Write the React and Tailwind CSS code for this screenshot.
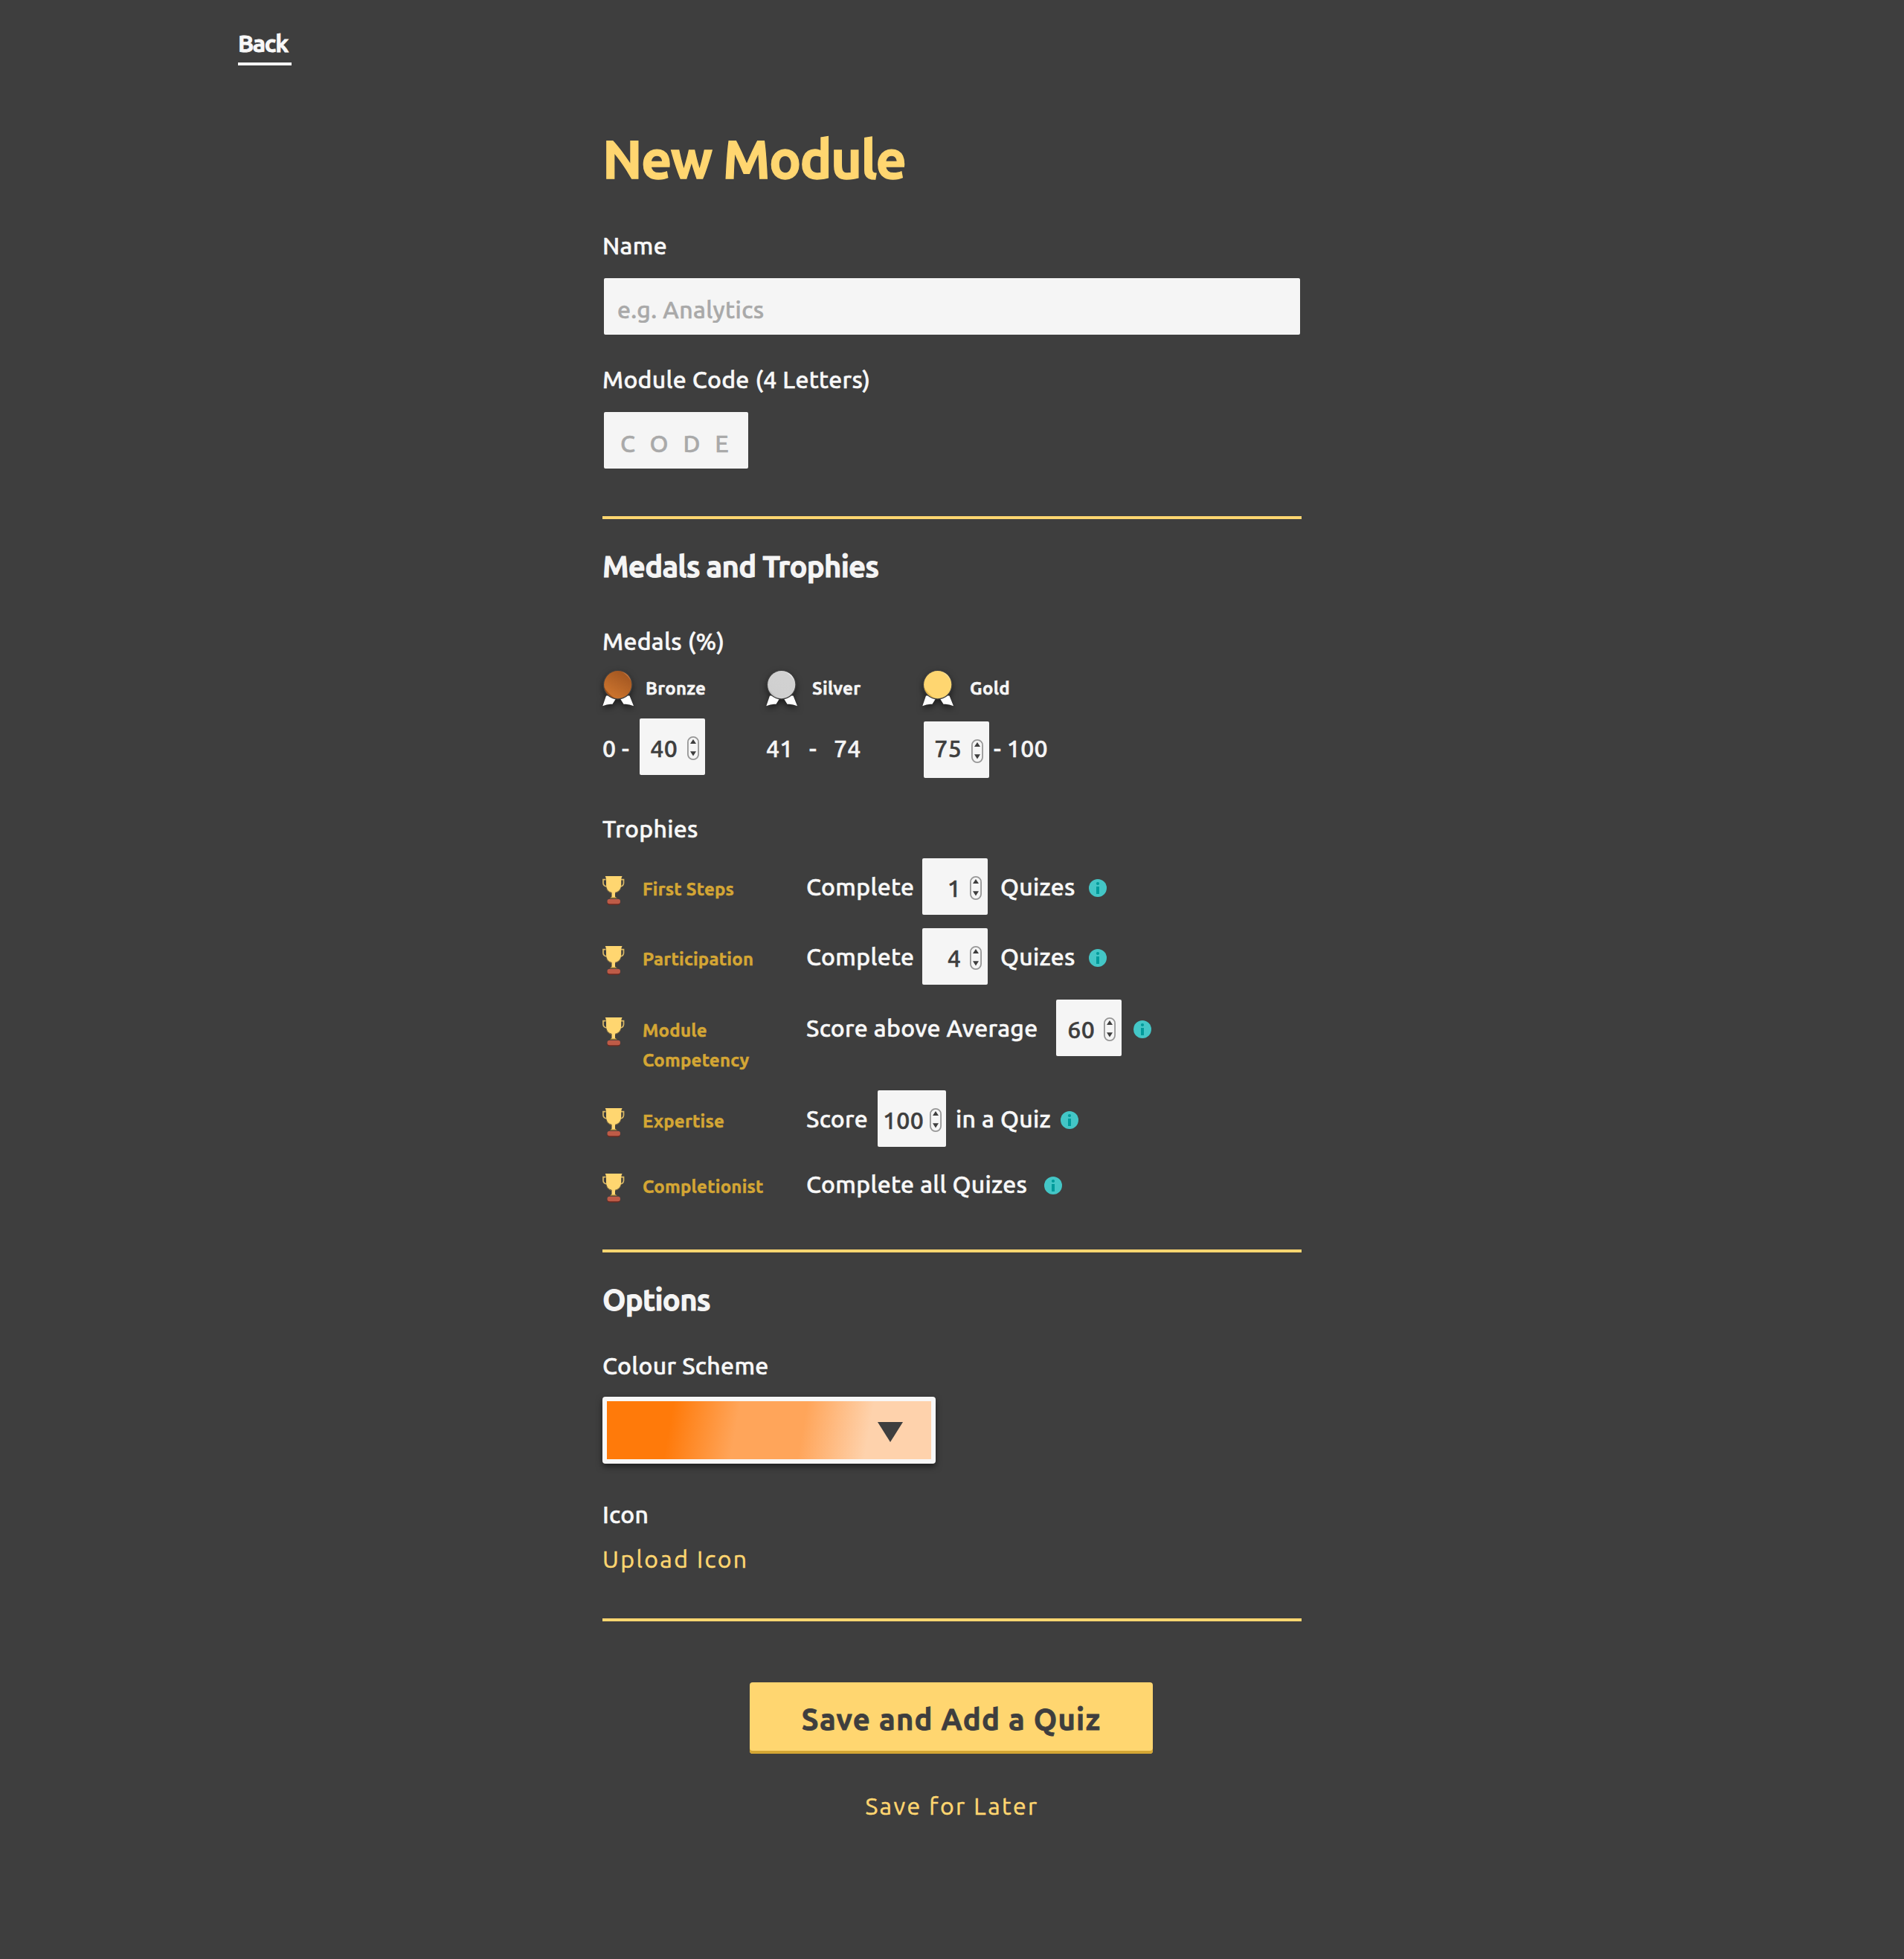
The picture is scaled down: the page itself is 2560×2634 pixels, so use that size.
import React from "react";

const medalTones = {
  bronze: { from: "#d0772f", to: "#9f5420", shine: "#cf8350", shade: "#8f4513" },
  silver: { from: "#cfcfcf", to: "#d2d2d2", shine: "#f6f6f6", shade: "#bdbdbd" },
  gold: { from: "#ffd670", to: "#ffd670", shine: "#ffe7a8", shade: "#dcae3e" },
};

function Medal({ tone }) {
  const t = medalTones[tone];
  return (
    <svg
      width="44"
      height="54"
      viewBox="0 0 44 54"
      className="shrink-0 overflow-visible drop-shadow-[0_4px_4px_rgba(0,0,0,0.5)]"
    >
      <defs>
        <linearGradient id={`face-${tone}`} x1="0.2" y1="1" x2="0.8" y2="0">
          <stop offset="0" stopColor={t.from} />
          <stop offset="1" stopColor={t.to} />
        </linearGradient>
        <linearGradient id={`shine-${tone}`} x1="0.25" y1="0.75" x2="0.8" y2="0.2">
          <stop offset="0.3" stopColor={t.shine} stopOpacity="0.35" />
          <stop offset="1" stopColor={t.shine} />
        </linearGradient>
      </defs>
      <path d="M5 39.5 0.3 53.2Q7 50 13.5 50.8L18 43.5 15 39ZM36.5 39.5 42 53.2Q35 50 28.5 50.8L24 43.5 27 39Z" fill="#fff" />
      <circle cx="20.7" cy="24.6" r="20" fill="#3e3e3e" />
      <circle cx="20.7" cy="24.6" r="18.6" fill={`url(#face-${tone})`} />
      <path d="M25 6.5A18.6 18.6 0 0 1 39 21Q34 11.500 25 6.500Z" fill={`url(#shine-${tone})`} />
      <path d="M2.400 28A18.600 18.600 0 0 0 17 42.900Q8 37.500 2.400 28Z" fill={t.shade} fillOpacity="0.75" />
    </svg>
  );
}

function Trophy() {
  return (
    <svg width="30" height="40" viewBox="0 0 30 40" className="mt-6 shrink-0">
      <path
        d="M4.500 4.700H1V9.500Q1.200 13 5.500 14M25 4.700H28.500V9.500Q28.300 13 24.500 14"
        fill="none"
        stroke="#d8b765"
        strokeWidth="1.700"
      />
      <path d="M3.700 0H26.600Q25.200 2 25.200 5V12.500Q24.500 20.500 17 22V27.500L19 29.800H10.700L12.500 27.500V22Q5.600 20.500 5 12.500V5Q5 2 3.700 0Z" fill="#ffd670" />
      <path d="M5.800 17Q8 22.300 12.500 22.500M17 22.500Q22 21.500 24.400 17" fill="none" stroke="#9b8045" strokeWidth="0.900" />
      <path d="M10.600 29.300H19.400" stroke="#8f7433" strokeWidth="1.400" />
      <path d="M10 31.500H20.500Q24 32.500 24 35.500 23.500 38.800 20.500 38.800H10Q6.500 38.800 6.400 35.500 6.500 32.500 10 31.500Z" fill="#6b2a20" />
      <rect x="6.500" y="30.700" width="17.500" height="6.600" rx="3.300" fill="#be5b47" />
    </svg>
  );
}

function Info({ className = "" }) {
  return (
    <svg width="24" height="24" viewBox="0 0 24 24" className={`mt-7 shrink-0 ${className}`}>
      <circle cx="12" cy="12" r="12" fill="#43c6c6" />
      <circle cx="12" cy="6" r="2.100" fill="#009a9a" />
      <rect x="10" y="10" width="4" height="10" fill="#009a9a" />
    </svg>
  );
}

function Stepper({ value, className = "w-[88px]", text = "mt-5 mr-[13px]", edge = "mr-2" }) {
  return (
    <div className={`flex h-[76px] shrink-0 justify-end rounded-[2px] bg-[#f5f5f5] ${className}`}>
      <span className={`text-[#3e3e3e] ${text}`}>{value}</span>
      <svg width="16" height="32" viewBox="0 0 16 32" className={`mt-6 shrink-0 ${edge}`}>
        <rect x="0.900" y="0.900" width="14.200" height="30.200" rx="7.100" fill="none" stroke="#979797" strokeWidth="1.800" />
        <path d="M8 4 12 10H4Z M8 26.500 4 20.300H12Z" fill="#3e3e3e" />
      </svg>
    </div>
  );
}

function Rule({ className }) {
  return <hr className={`h-1 border-0 bg-[#ffd670] ${className}`} />;
}

function TrophyRow({ label, height, children }) {
  return (
    <div className={`flex ${height}`}>
      <Trophy />
      <span className="mt-[22px] ml-6 w-[170px] text-[24px] leading-[40px] font-bold tracking-[0.01em] text-[#d4a634]">
        {label}
      </span>
      <div className="ml-[50px] flex items-start whitespace-nowrap">{children}</div>
    </div>
  );
}

export default function App() {
  return (
    <div className="min-h-[2634px] bg-[#3e3e3e] font-['Ubuntu','Noto_Sans',sans-serif] text-[32px] leading-[40px] font-medium tracking-[0.009em] text-[#f8f8f8] [-webkit-text-stroke:0.5px]">
      <nav className="flex pt-[38px] pl-[320px]">
        <a className="h-[50px] w-[72px] border-b-4 border-[#f5f5f5] font-bold tracking-[-0.043em] [-webkit-text-stroke:0.8px]">Back</a>
      </nav>

      <main className="mx-auto w-[940px]">
        <h1 className="mt-[82px] text-[72px] leading-[88px] font-bold tracking-[-0.024em] text-[#ffd670] [-webkit-text-stroke:1.4px]">New Module</h1>

        <label className="mt-[52px] block">Name</label>
        <input
          placeholder="e.g. Analytics"
          className="mx-[2px] mt-6 block h-[76px] w-[936px] rounded-[2px] bg-[#f5f5f5] px-[18px] pt-[22px] pb-[14px] tracking-[0.012em] placeholder:text-[#a9a9a9]"
        />
        <label className="mt-10 block">Module Code (4 Letters)</label>
        <input
          placeholder="CODE"
          className="mx-[2px] mt-6 block h-[76px] w-[194px] rounded-[2px] bg-[#f5f5f5] pt-[22px] pb-[14px] pl-[22px] tracking-[0.625em] placeholder:text-[#a9a9a9]"
        />

        <Rule className="mt-16" />

        <h2 className="mt-10 text-[40px] leading-[48px] font-bold tracking-[-0.0185em] text-[#f5f5f5] [-webkit-text-stroke:0.9px]">
          Medals and Trophies
        </h2>
        <h3 className="mt-14">Medals (%)</h3>
        <div className="mt-[14px] grid grid-cols-[220px_210px_510px] text-[#f5f5f5]">
          <div>
            <div className="flex h-[60px]">
              <Medal tone="bronze" />
              <span className="mt-[10px] ml-[14px] text-[24px] font-bold">Bronze</span>
            </div>
            <div className="mt-[10px] flex">
              <span className="mt-5 w-[50px] shrink-0 whitespace-nowrap">0 -</span>
              <Stepper value="40" />
            </div>
          </div>
          <div>
            <div className="flex h-[60px]">
              <Medal tone="silver" />
              <span className="mt-[10px] ml-[18px] text-[24px] font-bold">Silver</span>
            </div>
            <div className="mt-[30px] flex">
              <span className="w-[58px]">41</span>
              <span className="w-[33px]">-</span>
              <span>74</span>
            </div>
          </div>
          <div>
            <div className="flex h-[60px]">
              <Medal tone="gold" />
              <span className="mt-[10px] ml-5 text-[24px] font-bold">Gold</span>
            </div>
            <div className="mt-[14px] ml-[2px] flex">
              <Stepper value="75" text="mt-4 mr-[13px]" />
              <span className="mt-4 ml-[6px]">- 100</span>
            </div>
          </div>
        </div>

        <h3 className="mt-12">Trophies</h3>
        <div className="mt-5">
          <TrophyRow label="First Steps" height="h-[94px]">
            <span className="mt-[18px] w-[156px]">Complete</span>
            <Stepper value="1" text="mt-5 mr-3" />
            <span className="mt-[18px] ml-[17px] w-[101px]">Quizes</span>
            <Info className="ml-[18px]" />
          </TrophyRow>
          <TrophyRow label="Participation" height="h-[96px]">
            <span className="mt-[18px] w-[156px]">Complete</span>
            <Stepper value="4" text="mt-5 mr-3" />
            <span className="mt-[18px] ml-[17px] w-[101px]">Quizes</span>
            <Info className="ml-[18px]" />
          </TrophyRow>
          <TrophyRow label="Module Competency" height="h-[122px]">
            <span className="mt-[18px] w-[336px]">Score above Average</span>
            <Stepper value="60" text="mt-5 mr-3" />
            <Info className="ml-4" />
          </TrophyRow>
          <TrophyRow label="Expertise" height="h-[88px]">
            <span className="mt-[18px] w-[96px]">Score</span>
            <Stepper value="100" className="w-[92px]" text="mt-5 mr-2" edge="mr-[6px]" />
            <span className="mt-[18px] ml-[13px] w-[141px]">in a Quiz</span>
            <Info />
          </TrophyRow>
          <TrophyRow label="Completionist" height="h-[76px]">
            <span className="mt-[18px] w-[320px]">Complete all Quizes</span>
            <Info />
          </TrophyRow>
        </div>

        <Rule className="mt-[50px]" />

        <h2 className="mt-10 text-[40px] leading-[48px] font-bold tracking-[-0.0185em] text-[#f5f5f5] [-webkit-text-stroke:0.9px]">Options</h2>
        <h3 className="mt-11">Colour Scheme</h3>
        <button className="mt-[22px] flex h-[90px] w-[448px] items-center justify-end rounded-[4px] bg-[#f8f8f8] p-[6px] shadow-[0_4px_8px_rgba(0,0,0,0.5)]">
          <span className="flex h-[78px] w-[436px] justify-end bg-[linear-gradient(100deg,#ff7a0a_20%,#ffa55a_40%,#ffa55a_60%,#fed2ac_80%)]">
            <svg width="34" height="27" viewBox="0 0 34 27" className="mt-7 mr-[38px]">
              <path d="M0 0H34L17 27Z" fill="#3e3e3e" />
            </svg>
          </span>
        </button>
        <h3 className="mt-12">Icon</h3>
        <a className="mt-5 block font-normal tracking-[0.075em] text-[#ffd670]">Upload Icon</a>

        <Rule className="mt-[60px]" />

        <button className="mt-[82px] ml-[198px] block h-24 w-[542px] rounded-[4px] bg-[#ffd670] pt-[26px] pb-[22px] text-[40px] leading-[48px] font-bold tracking-[0.032em] text-[#3e3e3e] shadow-[inset_0_-4px_0_#d4a634] [-webkit-text-stroke:0.8px]">
          Save and Add a Quiz
        </button>
        <a className="mt-[50px] block text-center font-normal tracking-[0.076em] text-[#ffd670]">Save for Later</a>
      </main>
    </div>
  );
}
